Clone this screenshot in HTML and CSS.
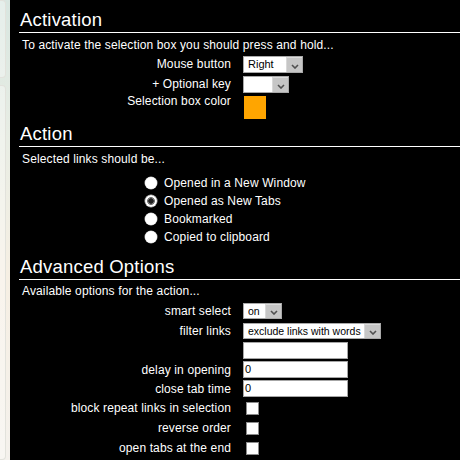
FILE: index.html
```html
<!DOCTYPE html>
<html>
<head>
<meta charset="utf-8">
<link rel="stylesheet" href="styles.css">
</head>
<body>
<div class="strip">
  <div class="win win1"></div>
  <div class="win win2"></div>
</div>
<div class="panel">
  <h2 class="heading">Activation</h2>
  <p class="desc">To activate the selection box you should press and hold...</p>
  <div class="form act-form">
    <div class="row r20"><span class="lbl">Mouse button</span><div class="select s-right"><span class="val">Right</span><span class="btn"><svg width="8" height="5" viewBox="0 0 8 5"><path d="M1 1 L4 4 L7 1" fill="none" stroke="#505050" stroke-width="1.6"/></svg></span></div></div>
    <div class="row r20"><span class="lbl">+ Optional key</span><div class="select s-key"><span class="val"></span><span class="btn"><svg width="8" height="5" viewBox="0 0 8 5"><path d="M1 1 L4 4 L7 1" fill="none" stroke="#505050" stroke-width="1.6"/></svg></span></div></div>
    <div class="row top"><span class="lbl">Selection box color</span><div class="swatch"></div></div>
  </div>

  <h2 class="heading h-action">Action</h2>
  <p class="desc">Selected links should be...</p>
  <div class="radios">
    <label class="radio"><span class="dot"></span>Opened in a New Window</label>
    <label class="radio"><span class="dot on"></span>Opened as New Tabs</label>
    <label class="radio"><span class="dot"></span>Bookmarked</label>
    <label class="radio"><span class="dot"></span>Copied to clipboard</label>
  </div>

  <h2 class="heading h-adv">Advanced Options</h2>
  <p class="desc d-adv">Available options for the action...</p>
  <div class="form adv-form">
    <div class="row r20"><span class="lbl">smart select</span><div class="select small s-on"><span class="val">on</span><span class="btn"><svg width="8" height="5" viewBox="0 0 8 5"><path d="M1 1 L4 4 L7 1" fill="none" stroke="#505050" stroke-width="1.6"/></svg></span></div></div>
    <div class="row r20"><span class="lbl">filter links</span><div class="select small s-filter"><span class="val">exclude links with words</span><span class="btn"><svg width="8" height="5" viewBox="0 0 8 5"><path d="M1 1 L4 4 L7 1" fill="none" stroke="#505050" stroke-width="1.6"/></svg></span></div></div>
    <div class="row r19"><span class="lbl"></span><div class="input"></div></div>
    <div class="row r19"><span class="lbl">delay in opening</span><div class="input">0</div></div>
    <div class="row r19"><span class="lbl">close tab time</span><div class="input">0</div></div>
    <div class="row r20"><span class="lbl">block repeat links in selection</span><div class="check"></div></div>
    <div class="row r20"><span class="lbl">reverse order</span><div class="check"></div></div>
    <div class="row r20"><span class="lbl">open tabs at the end</span><div class="check"></div></div>
  </div>
</div>
</body>
</html>
```

FILE: styles.css
```css
html, body {
  margin: 0;
  padding: 0;
  height: 100%;
}
body {
  display: flex;
  background: #f3efe7;
  font-family: "Liberation Sans", Arial, sans-serif;
  overflow: hidden;
}
.strip {
  width: 10px;
  flex: none;
  display: flex;
  flex-direction: column;
  gap: 7px;
  background: linear-gradient(180deg, #d8e6e0 0%, #e8ede4 30%, #f6efe3 60%, #f4f1ec 100%);
}
.win {
  width: 5px;
  border: 1px solid #e2e2dc;
  border-left: none;
  border-radius: 0 4px 4px 0;
  background: rgba(255,255,255,0.35);
}
.win1 { height: 76px; }
.win2 { flex: 1; margin-bottom: 0; }
.panel {
  flex: 1;
  background: #000;
  color: #fff;
  padding: 10px 0 0 9px;
  font-size: 12px;
  line-height: 14px;
  letter-spacing: 0.13px;
}
.heading {
  margin: 0;
  font-weight: normal;
  font-size: 18.5px;
  line-height: 20px;
  letter-spacing: 0.2px;
  padding: 0 0 2px 1px;
  border-bottom: 1px solid #fff;
}
.h-action { margin-top: 5px; }
.h-adv { margin-top: 11px; }
.desc {
  margin: 5px 0 0 3px;
}
.d-adv { margin-top: 4px; }
.form {
  display: flex;
  flex-direction: column;
}
.act-form { margin-top: 2px; }
.adv-form { margin-top: 3px; }
.row {
  display: grid;
  grid-template-columns: 212px 1fr;
  column-gap: 12px;
  align-items: center;
}
.row.r20 { height: 20px; }
.row.r19 { height: 19px; }
.row.top { align-items: start; }
.lbl {
  text-align: right;
  white-space: nowrap;
}
.select {
  display: flex;
  height: 17px;
  box-sizing: border-box;
  border: 1px solid #a9a9a9;
  background: #fff;
  color: #000;
  font-size: 11px;
  line-height: 15px;
  letter-spacing: 0;
}
.select .val {
  flex: 1;
  padding-left: 4px;
  white-space: nowrap;
  overflow: hidden;
}
.select .btn {
  width: 16px;
  box-sizing: border-box;
  background: #c6c6c6;
  border-left: 1px solid #d8d8d8;
  border-top: 1px solid #dcdcdc;
  display: flex;
  align-items: flex-end;
  justify-content: center;
  padding-bottom: 3px;
}
.s-right { width: 60px; }
.s-key { width: 46px; }
.select.small { height: 16px; font-size: 10.5px; line-height: 14px; }
.s-on { width: 39px; }
.s-filter { width: 138px; height: 17px; }
.swatch {
  width: 22px;
  height: 23px;
  margin: 2px 0 0 1px;
  background: #ffa500;
}
.radios {
  margin: 8px 0 0 126px;
  display: flex;
  flex-direction: column;
}
.radio {
  display: flex;
  align-items: center;
  height: 18px;
}
.dot {
  width: 12px;
  height: 12px;
  border-radius: 50%;
  background: #fff;
  box-shadow: 0 0 0 0.5px #bbb;
  margin-right: 7px;
  flex: none;
}
.dot.on {
  background: radial-gradient(circle, #222 0 2.4px, #777 2.9px 3.6px, #fff 4.2px);
}
.input {
  width: 105px;
  height: 17px;
  box-sizing: border-box;
  border: 1px solid #a6a6a6;
  background: #fff;
  color: #000;
  font-size: 11px;
  line-height: 15px;
  letter-spacing: 0;
  padding-left: 1px;
}
.check {
  width: 13px;
  height: 13px;
  box-sizing: border-box;
  border: 1px solid #8a8a8a;
  background: #fff;
  margin-left: 3px;
}
```
